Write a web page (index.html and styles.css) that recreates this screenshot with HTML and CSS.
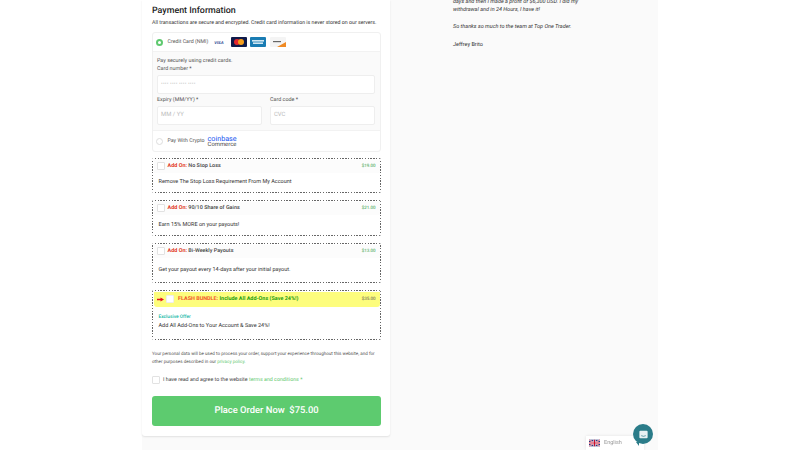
FILE: index.html
```html
<!DOCTYPE html>
<html>
<head>
  <title>Checkout</title>
  <link rel="stylesheet" href="styles.css">
</head>
<body>
  <div class="page">
    <!-- Left column: payment form -->
    <div class="card">
      <h2 class="title">Payment Information</h2>
      <p class="secure">All transactions are secure and encrypted. Credit card information is never stored on our servers.</p>

      <div class="methods">
        <div class="method method-card">
          <span class="radio radio-on"></span>
          <span class="method-name">Credit Card (NMI)</span>
          <span class="cards">
            <svg class="pay" viewBox="0 0 16 10"><rect width="16" height="10" fill="#fff"/><text x="8" y="7" text-anchor="middle" class="visa-text">VISA</text></svg>
            <svg class="pay" viewBox="0 0 16 10"><rect width="16" height="10" rx="1" fill="#0f1a4a"/><circle cx="6" cy="5" r="3" fill="#e3262e"/><circle cx="10" cy="5" r="3" fill="#f59e1c"/></svg>
            <svg class="pay" viewBox="0 0 16 10"><rect width="16" height="10" rx="1" fill="#1a7cb3"/><rect x="2" y="3" width="12" height="1.6" fill="#cfe6f2"/><rect x="3" y="5.4" width="10" height="1.6" fill="#cfe6f2"/></svg>
            <svg class="pay" viewBox="0 0 16 10"><rect width="16" height="10" rx="1" fill="#f4f4f4"/><rect x="3" y="4" width="8" height="1.2" fill="#666"/><path d="M7 10 L16 5 L16 10 Z" fill="#f08a24"/></svg>
          </span>
        </div>
        <div class="panel">
          <div class="panel-note">Pay securely using credit cards.</div>
          <label class="field-label">Card number *</label>
          <div class="input input-wide">•••• •••• •••• ••••</div>
          <div class="field-row">
            <div class="field">
              <label class="field-label">Expiry (MM/YY) *</label>
              <div class="input">MM / YY</div>
            </div>
            <div class="field">
              <label class="field-label">Card code *</label>
              <div class="input">CVC</div>
            </div>
          </div>
        </div>
        <div class="method method-crypto">
          <span class="radio"></span>
          <span class="method-name">Pay With Crypto</span>
          <span class="coinbase"><span class="coinbase-top">coinbase</span><span class="coinbase-sub">Commerce</span></span>
        </div>
      </div>

      <div class="addon addon-1">
        <div class="addon-head">
          <span class="check"></span>
          <span class="addon-name"><b class="red">Add On:</b> No Stop Loss</span>
          <span class="price">$19.00</span>
        </div>
        <div class="addon-text">Remove The Stop Loss Requirement From My Account</div>
      </div>

      <div class="addon addon-2">
        <div class="addon-head">
          <span class="check"></span>
          <span class="addon-name"><b class="red">Add On:</b> 90/10 Share of Gains</span>
          <span class="price">$21.00</span>
        </div>
        <div class="addon-text">Earn 15% MORE on your payouts!</div>
      </div>

      <div class="addon addon-3">
        <div class="addon-head">
          <span class="check"></span>
          <span class="addon-name"><b class="red">Add On:</b> Bi-Weekly Payouts</span>
          <span class="price">$13.00</span>
        </div>
        <div class="addon-text">Get your payout every 14-days after your initial payout.</div>
      </div>

      <div class="addon addon-flash">
        <div class="addon-head flash-head">
          <svg class="arrow" viewBox="0 0 10 6"><path d="M0 2 H5 V0 L10 3 L5 6 V4 H0 Z" fill="#e5131d"/></svg>
          <span class="check"></span>
          <span class="addon-name"><b class="orange">FLASH BUNDLE:</b> <b class="green">Include All Add-Ons (Save 24%!)</b></span>
          <span class="price price-dark">$35.00</span>
        </div>
        <div class="exclusive">Exclusive Offer</div>
        <div class="addon-text flash-text">Add All Add-Ons to Your Account &amp; Save 24%!</div>
      </div>

      <p class="privacy">Your personal data will be used to process your order, support your experience throughout this website, and for other purposes described in our <span class="link">privacy policy.</span></p>

      <div class="terms">
        <span class="check check-small"></span>
        <span>I have read and agree to the website <span class="link">terms and conditions</span> <span class="link">*</span></span>
      </div>

      <button class="place-order">Place Order Now&nbsp; $75.00</button>
    </div>

    <!-- Right column: testimonial -->
    <div class="side">
      <p class="quote">days and then I made a profit of $6,300 USD. I did my<br>withdrawal and in 24 Hours, I have it!</p>
      <p class="quote">So thanks so much to the team at Top One Trader.</p>
      <p class="author">Jeffrey Brito</p>
    </div>
  </div>

  <!-- Language switcher and chat button float over the page -->
  <div class="lang">
    <svg class="flag" viewBox="0 0 20 12">
      <rect width="20" height="12" fill="#27357e"/>
      <path d="M0 0 L20 12 M20 0 L0 12" stroke="#fff" stroke-width="2.4"/>
      <path d="M0 0 L20 12 M20 0 L0 12" stroke="#c8102e" stroke-width="1"/>
      <path d="M10 0 V12 M0 6 H20" stroke="#fff" stroke-width="4"/>
      <path d="M10 0 V12 M0 6 H20" stroke="#c8102e" stroke-width="2.2"/>
    </svg>
    <span>English</span>
  </div>
  <div class="chat">
    <svg viewBox="0 0 24 24" class="chat-icon"><path d="M5 4 H19 A2 2 0 0 1 21 6 V18 A2 2 0 0 1 19 20 H5 A2 2 0 0 1 3 18 V6 A2 2 0 0 1 5 4 Z" fill="#e9f1f3"/><path d="M7 14.5 Q12 17.5 17 14.5" stroke="#2b7c89" stroke-width="1.5" fill="none"/></svg>
  </div>
</body>
</html>
```
FILE: styles.css
```css
html, body {
  margin: 0;
  height: 450px;
  overflow: hidden;
  background-color: #ffffff;
  font-family: Roboto, "Liberation Sans", sans-serif;
  color: #333333;
  text-rendering: geometricPrecision;
}

.page {
  width: 516px;
  height: 450px;
  margin: 0 auto;
  display: flex;
  background-color: #fafafa;
}

.card {
  width: 229px;
  height: 436px;
  padding: 0 9px 0 10px;
  background-color: #ffffff;
  border-radius: 0 0 3px 3px;
  box-shadow: 0 1px 2px rgba(0, 0, 0, 0.1);
  flex-shrink: 0;
  box-sizing: content-box;
}

.title {
  margin: 0;
  padding-top: 5px;
  font-size: 8.9px;
  line-height: 13px;
  font-weight: 500;
  color: #222222;
}

.secure {
  margin: 0;
  padding-top: 1px;
  font-size: 5.25px;
  line-height: 8px;
  color: #333333;
  white-space: nowrap;
}

/* Payment methods box */
.methods {
  margin-top: 5px;
  border: 1px solid #f0f0f0;
  border-radius: 3px;
  height: 118px;
}

.method {
  display: flex;
  align-items: center;
  padding-left: 3px;
}

.method-card {
  height: 18px;
}

.method-crypto {
  height: 20px;
}

.radio {
  width: 5px;
  height: 5px;
  border: 1px solid #dddddd;
  border-radius: 50%;
  margin-right: 4.5px;
  background: #ffffff;
}

.radio-on {
  border: 2px solid #5fc96f;
  width: 3px;
  height: 3px;
}

.method-name {
  font-size: 5.25px;
  color: #555555;
}

.cards {
  display: flex;
  gap: 3.5px;
  margin-left: 3px;
}

.pay {
  width: 16px;
  height: 10px;
  display: block;
}

.visa-text {
  font-family: "Liberation Sans", sans-serif;
  font-size: 4px;
  font-weight: bold;
  font-style: italic;
  fill: #24408e;
}

.coinbase {
  display: flex;
  flex-direction: column;
  margin-left: 3px;
}

.coinbase-top {
  font-size: 7.2px;
  line-height: 7px;
  color: #1652f0;
}

.coinbase-sub {
  font-size: 5.9px;
  line-height: 6px;
  color: #444444;
}

.panel {
  height: 80px;
  padding: 5px 5px 0 4px;
  background-color: #fafafa;
  border-top: 1px solid #f2f2f2;
  border-bottom: 1px solid #f2f2f2;
  box-sizing: border-box;
}

.panel-note,
.field-label {
  display: block;
  font-size: 5.4px;
  line-height: 8px;
  color: #555555;
}

.input {
  height: 17px;
  margin-top: 2px;
  padding-left: 3px;
  border: 1px solid #eeeeee;
  border-radius: 2px;
  background-color: #ffffff;
  font-size: 5.9px;
  line-height: 17px;
  color: #bbbbbb;
}

.input-wide {
  margin-bottom: 2px;
  font-size: 5px;
  letter-spacing: 0.2px;
}

.field-row {
  display: flex;
  gap: 8px;
}

.field {
  flex: 1;
}

/* Add-on boxes: dotted frame drawn with gradients, finer than a css dotted border */
.addon {
  --dot: #666666;
  margin-top: 6px;
  padding: 1.5px;
  border-radius: 2px;
  box-sizing: border-box;
  background:
    repeating-linear-gradient(90deg, var(--dot) 0 1.4px, transparent 1.4px 2.8px) top / 100% 1.4px no-repeat,
    repeating-linear-gradient(90deg, var(--dot) 0 1.4px, transparent 1.4px 2.8px) bottom / 100% 1.4px no-repeat,
    repeating-linear-gradient(0deg, var(--dot) 0 1.4px, transparent 1.4px 2.8px) left / 1.4px 100% no-repeat,
    repeating-linear-gradient(0deg, var(--dot) 0 1.4px, transparent 1.4px 2.8px) right / 1.4px 100% no-repeat;
}

.addon-1 { height: 35px; }
.addon-2 { height: 36px; margin-top: 7px; }
.addon-3 { height: 40px; margin-top: 7px; }
.addon-flash { height: 50px; margin-top: 7px; }

.addon-head {
  display: flex;
  align-items: center;
  height: 13px;
  padding: 0 4px 0 3.5px;
  background-color: #fcfcfc;
}

.check {
  width: 6px;
  height: 6px;
  border: 1px solid #e2e2e2;
  border-radius: 1px;
  background-color: #ffffff;
  margin-right: 2.5px;
  flex-shrink: 0;
}

.addon-name {
  flex: 1;
  font-size: 5.45px;
  font-weight: 500;
  color: #444444;
}

.addon-name b {
  font-weight: 700;
}

.red { color: #e2412b; }
.orange { color: #f2542a; }
.green { color: #1f9d12; }

.price {
  font-size: 4.5px;
  color: #2e9e3e;
}

.price-dark {
  color: #555555;
}

.addon-text {
  margin-top: 5px;
  padding-left: 5px;
  font-size: 5.5px;
  line-height: 8px;
  color: #333333;
}

.addon-2 .addon-text {
  margin-top: 6px;
}

.addon-3 .addon-text {
  margin-top: 8px;
}

.flash-head {
  height: 15px;
  background-color: #fdfd7d;
  border-radius: 0 0 3px 3px;
}

.arrow {
  width: 7px;
  height: 5px;
  margin-right: 1.5px;
  flex-shrink: 0;
}

.flash-head .check {
  margin-right: 4.5px;
  border-color: #eeeeee;
}

.exclusive {
  margin-top: 8px;
  padding-left: 5px;
  font-size: 4.8px;
  line-height: 6px;
  font-weight: 500;
  color: #14b8a6;
}

.addon-flash .flash-text {
  margin-top: 1px;
}

.privacy {
  margin: 11px 0 0;
  font-size: 4.55px;
  line-height: 8px;
  color: #555555;
}

.link {
  color: #5fc96f;
}

.terms {
  display: flex;
  align-items: center;
  margin-top: 8.5px;
  font-size: 5.3px;
  line-height: 8px;
  color: #444444;
}

.check-small {
  margin-right: 3px;
}

.place-order {
  display: block;
  width: 100%;
  height: 30px;
  margin-top: 12px;
  border: none;
  border-radius: 3px;
  background-color: #5dcb6f;
  color: #ffffff;
  font-family: Roboto, sans-serif;
  font-size: 9.4px;
  font-weight: 500;
  text-rendering: geometricPrecision;
}

/* Testimonial column */
.side {
  margin-top: -2px;
  padding: 0 0 0 63px;
  font-size: 5.5px;
  line-height: 8px;
  color: #333333;
}

.quote {
  margin: 0 0 8.7px;
  font-style: italic;
}

.author {
  margin: 10.3px 0 0;
}

/* Floating widgets */
.lang {
  position: fixed;
  left: 586px;
  top: 436px;
  width: 58px;
  height: 14px;
  display: flex;
  align-items: center;
  padding-left: 3px;
  gap: 4px;
  background-color: #ffffff;
  box-shadow: 0 0 3px rgba(0, 0, 0, 0.1);
  font-size: 5.5px;
  color: #999999;
  box-sizing: border-box;
}

.flag {
  width: 11px;
  height: 8px;
}

.chat {
  position: fixed;
  left: 633px;
  top: 424px;
  width: 20px;
  height: 20px;
  display: flex;
  align-items: center;
  justify-content: center;
  border-radius: 50%;
  background-color: #2b7c89;
}

.chat::after {
  content: "";
  position: absolute;
  left: 3px;
  bottom: -2px;
  border-top: 4px solid #2b7c89;
  border-left: 3px solid transparent;
}

.chat-icon {
  width: 11px;
  height: 11px;
}
```
